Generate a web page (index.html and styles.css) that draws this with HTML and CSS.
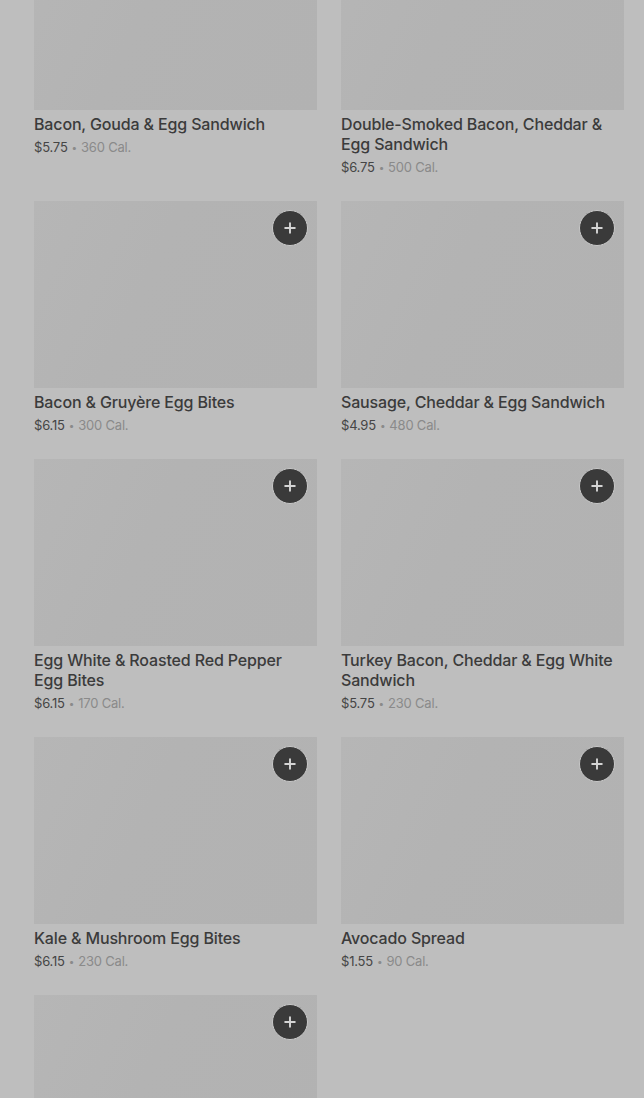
FILE: index.html
```html
<!DOCTYPE html>
<html lang="en">
<head>
<meta charset="utf-8">
<title>Menu</title>
<link rel="stylesheet" href="styles.css">
</head>
<body>
<main class="grid">
  <article class="card">
    <div class="thumb"></div>
    <h3 class="title">Bacon, Gouda &amp; Egg Sandwich</h3>
    <p class="meta"><span class="price">$5.75</span><span class="dot">•</span>360 Cal.</p>
  </article>
  <article class="card">
    <div class="thumb"></div>
    <h3 class="title">Double-Smoked Bacon, Cheddar &amp; Egg Sandwich</h3>
    <p class="meta"><span class="price">$6.75</span><span class="dot">•</span>500 Cal.</p>
  </article>
  <article class="card">
    <div class="thumb"><button class="add" aria-label="Add"><svg viewBox="0 0 16 16" width="14" height="14"><path d="M8 2.5v11M2.5 8h11" stroke="currentColor" stroke-width="2.2" stroke-linecap="round"/></svg></button></div>
    <h3 class="title">Bacon &amp; Gruyère Egg Bites</h3>
    <p class="meta"><span class="price">$6.15</span><span class="dot">•</span>300 Cal.</p>
  </article>
  <article class="card">
    <div class="thumb"><button class="add" aria-label="Add"><svg viewBox="0 0 16 16" width="14" height="14"><path d="M8 2.5v11M2.5 8h11" stroke="currentColor" stroke-width="2.2" stroke-linecap="round"/></svg></button></div>
    <h3 class="title">Sausage, Cheddar &amp; Egg Sandwich</h3>
    <p class="meta"><span class="price">$4.95</span><span class="dot">•</span>480 Cal.</p>
  </article>
  <article class="card">
    <div class="thumb"><button class="add" aria-label="Add"><svg viewBox="0 0 16 16" width="14" height="14"><path d="M8 2.5v11M2.5 8h11" stroke="currentColor" stroke-width="2.2" stroke-linecap="round"/></svg></button></div>
    <h3 class="title">Egg White &amp; Roasted Red Pepper Egg Bites</h3>
    <p class="meta"><span class="price">$6.15</span><span class="dot">•</span>170 Cal.</p>
  </article>
  <article class="card">
    <div class="thumb"><button class="add" aria-label="Add"><svg viewBox="0 0 16 16" width="14" height="14"><path d="M8 2.5v11M2.5 8h11" stroke="currentColor" stroke-width="2.2" stroke-linecap="round"/></svg></button></div>
    <h3 class="title">Turkey Bacon, Cheddar &amp; Egg White Sandwich</h3>
    <p class="meta"><span class="price">$5.75</span><span class="dot">•</span>230 Cal.</p>
  </article>
  <article class="card">
    <div class="thumb"><button class="add" aria-label="Add"><svg viewBox="0 0 16 16" width="14" height="14"><path d="M8 2.5v11M2.5 8h11" stroke="currentColor" stroke-width="2.2" stroke-linecap="round"/></svg></button></div>
    <h3 class="title">Kale &amp; Mushroom Egg Bites</h3>
    <p class="meta"><span class="price">$6.15</span><span class="dot">•</span>230 Cal.</p>
  </article>
  <article class="card">
    <div class="thumb"><button class="add" aria-label="Add"><svg viewBox="0 0 16 16" width="14" height="14"><path d="M8 2.5v11M2.5 8h11" stroke="currentColor" stroke-width="2.2" stroke-linecap="round"/></svg></button></div>
    <h3 class="title">Avocado Spread</h3>
    <p class="meta"><span class="price">$1.55</span><span class="dot">•</span>90 Cal.</p>
  </article>
  <article class="card">
    <div class="thumb"><button class="add" aria-label="Add"><svg viewBox="0 0 16 16" width="14" height="14"><path d="M8 2.5v11M2.5 8h11" stroke="currentColor" stroke-width="2.2" stroke-linecap="round"/></svg></button></div>
  </article>
</main>
</body>
</html>
```
FILE: styles.css
```css
html, body {
  margin: 0;
  padding: 0;
  background: #bebebe;
  height: 1098px;
  overflow: hidden;
}
body {
  font-family: Inter, "Noto Sans", sans-serif;
  color: #3b3b3b;
}
.grid {
  display: grid;
  grid-template-columns: 283px 283px;
  column-gap: 24px;
  row-gap: 24px;
  padding: 0 20px 0 34px;
  margin-top: -77px;
}
.card {
  display: flex;
  flex-direction: column;
}
.thumb {
  position: relative;
  height: 187px;
  background: linear-gradient(115deg, #b6b6b6 0%, #b3b3b3 40%, #b2b2b2 100%);
  margin-bottom: 4px;
}
.add {
  position: absolute;
  top: 9px;
  right: 9px;
  width: 36px;
  height: 36px;
  border-radius: 50%;
  border: 1px solid #c9c9c9;
  background: #3a3a3a;
  color: #d4d4d4;
  display: flex;
  align-items: center;
  justify-content: center;
  padding: 0;
}
.title {
  margin: 0;
  padding-right: 6px;
  font-size: 16px;
  line-height: 20px;
  font-weight: 500;
  color: #3b3b3b;
  letter-spacing: -0.15px;
}
.meta {
  margin: 3px 0 0;
  font-size: 13px;
  line-height: 20px;
  color: #8a8a8a;
  letter-spacing: -0.2px;
}
.price {
  color: #454545;
}
.dot {
  font-size: 10px;
  margin: 0 4px;
  vertical-align: 1px;
}
```
